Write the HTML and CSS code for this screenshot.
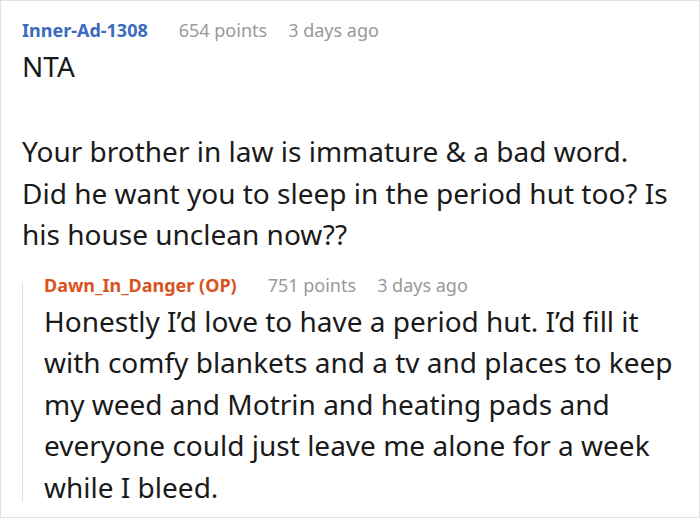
FILE: index.html
```html
<!DOCTYPE html>
<html lang="en">
<head>
<meta charset="utf-8">
<link rel="stylesheet" href="styles.css">
</head>
<body>
<div class="frame">
  <div class="comment">
    <div class="meta">
      <span class="author">Inner-Ad-1308</span>
      <span class="points">654 points</span>
      <span class="time">3 days ago</span>
    </div>
    <div class="body">
      <p>NTA</p>
      <p>Your brother in law is immature &amp; a bad word. Did he want you to sleep in the period hut too? Is his house unclean now??</p>
    </div>
    <div class="reply">
      <div class="rule"></div>
      <div class="reply-content">
        <div class="meta">
          <span class="author op">Dawn_In_Danger (OP)</span>
          <span class="points">751 points</span>
          <span class="time">3 days ago</span>
        </div>
        <div class="body">
          <p>Honestly I’d love to have a period hut. I’d fill it with comfy blankets and a tv and places to keep my weed and Motrin and heating pads and everyone could just leave me alone for a week while I bleed.</p>
        </div>
      </div>
    </div>
  </div>
</div>
</body>
</html>
```

FILE: styles.css
```css
html, body {
  margin: 0;
  padding: 0;
  background: #ffffff;
}

.frame {
  box-sizing: border-box;
  width: 700px;
  height: 518px;
  border: 1px solid #e2e2e2;
  overflow: hidden;
  font-family: "Noto Sans", "Open Sans", sans-serif;
  color: #1a1a1a;
}

.comment {
  padding: 17px 22px 0 21px;
}

.meta {
  display: flex;
  align-items: baseline;
  font-size: 18px;
  line-height: 24px;
  color: #999999;
}

.author {
  font-weight: 700;
  color: #3a6bbd;
  margin-right: 31px;
}

.author.op {
  color: #d9531e;
}

.points {
  margin-right: 21px;
}

.body {
  margin-top: 4px;
  font-size: 28px;
  line-height: 41.5px;
}

.body p {
  margin: 0;
}

.body p + p {
  margin-top: 43.5px;
}

.reply {
  display: flex;
  margin-top: 17px;
}

.rule {
  width: 1px;
  flex: none;
  background: #e0e0e0;
  margin: 10px 0 6px 0;
}

.reply-content {
  padding-left: 21px;
}
```
